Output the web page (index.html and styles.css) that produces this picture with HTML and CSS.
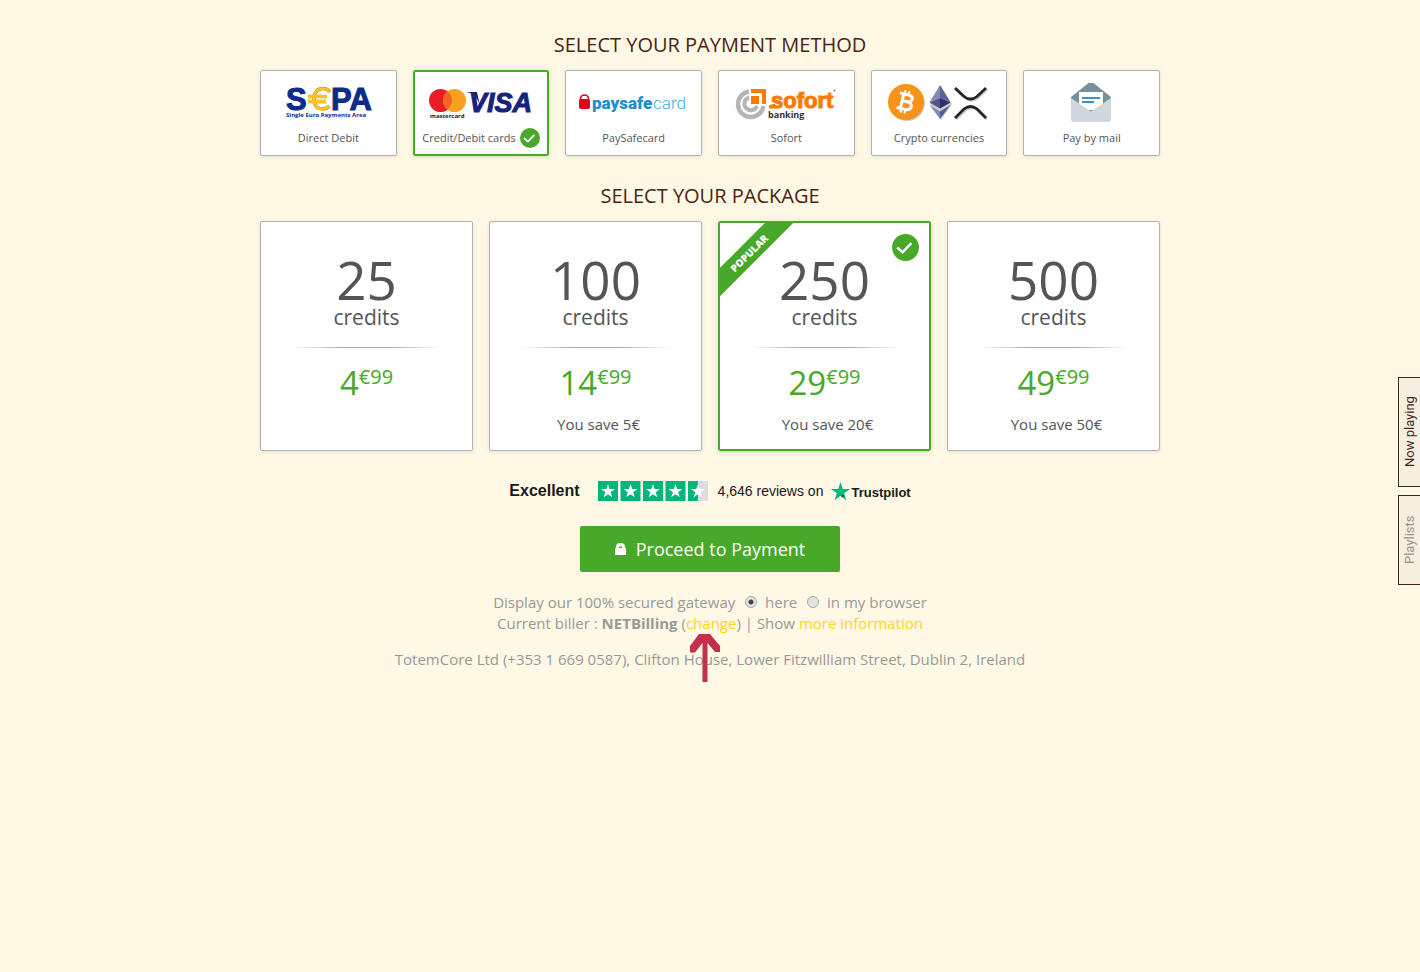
FILE: index.html
```
<!DOCTYPE html>
<html lang="en">
<head>
    <meta charset="UTF-8">
    <meta name="viewport" content="width=device-width, initial-scale=1.0">
    <title>Buy credits</title>
    <link rel="stylesheet" href="styles.css">
</head>
<body>

<svg class="defs" width="0" height="0" aria-hidden="true">
    <symbol id="check" viewBox="0 0 28 28">
        <circle cx="14" cy="14" r="14" fill="#48a829"/>
        <path d="M5.500 14l5.500 5 9-9.500" fill="none" stroke="#fff" stroke-width="2.600"/>
    </symbol>
    <symbol id="star" viewBox="0 0 20 20">
        <path d="M10 0l2.400 7.300H20l-6.200 4.500 2.400 7.300L10 14.600l-6.200 4.500 2.400-7.300L0 7.300h7.600z"/>
    </symbol>
</svg>

<main class="page">
    <form>
        <h2>SELECT YOUR PAYMENT METHOD</h2>
        <div class="methods">
            <label class="card method">
                <input type="radio" name="method">
                <svg class="logo" viewBox="0 0 110 40" aria-hidden="true">
                    <g font-family="Liberation Sans" font-weight="bold" fill="#0c2c8c">
                        <text x="13" y="27" font-size="31" stroke="#0c2c8c">S</text>
                        <text x="58" y="27" font-size="31" stroke="#0c2c8c">PA</text>
                        <text x="13" y="34" font-family="Open Sans" font-size="6">Single Euro Payments Area</text>
                    </g>
                    <path d="M57 9C53 4 44 4 41.500 12c-2 8 1 14 8 14 3 0 5-1 7-3M35 13.500h19M35 18.500h18" fill="none" stroke="#a8893a" stroke-width="3.600"/>
                    <path d="M57 9C53 4 44 4 41.500 12c-2 8 1 14 8 14 3 0 5-1 7-3M35 13.500h19M35 18.500h18" fill="none" stroke="#fbc51d" stroke-width="2.800"/>
                </svg>
                <span class="name">Direct Debit</span>
            </label>
            <label class="card method">
                <input type="radio" name="method" checked>
                <svg class="logo" viewBox="0 0 110 40" aria-hidden="true">
                    <circle cx="14.500" cy="17.500" r="11.500" fill="#ea1c27"/>
                    <circle cx="28.500" cy="17.500" r="11.500" fill="#f9a01f"/>
                    <path d="M21.500 8.400a11.500 11.500 0 0 1 0 18.200 11.500 11.500 0 0 1 0-18.200z" fill="#f26522"/>
                    <text x="4" y="35" font-family="Open Sans" font-size="6" font-weight="bold" fill="#222">mastercard</text>
                    <path d="M40 9h11l3 14C51 13 47 10 40 9z" fill="#14247e"/>
                    <text x="43" y="29" font-family="Liberation Sans" font-size="27" font-weight="bold" font-style="italic" fill="#14247e" stroke="#14247e">VISA</text>
                </svg>
                <span class="name">Credit/Debit cards <svg class="check" aria-hidden="true"><use href="#check"/></svg></span>
            </label>
            <label class="card method">
                <input type="radio" name="method">
                <svg class="logo" viewBox="0 0 110 40" aria-hidden="true">
                    <rect x="0" y="16" width="11" height="10" rx="2" fill="#e2001a"/>
                    <path d="M1.500 17v-1a4 4 0 0 1 8 0v1" fill="none" stroke="#e2001a" stroke-width="1.600"/>
                    <text x="13" y="26" font-family="Roboto" font-size="17" font-weight="900" fill="#1b8fd0">paysafe</text>
                    <text x="74" y="26" font-family="Roboto" font-size="17" font-weight="300" fill="#45ace0">card</text>
                </svg>
                <span class="name">PaySafecard</span>
            </label>
            <label class="card method">
                <input type="radio" name="method">
                <svg class="logo" viewBox="0 0 110 40" aria-hidden="true">
                    <path d="M18 8.500A12.800 12.800 0 1 0 32.500 23" fill="none" stroke="#b5b5b5" stroke-width="4.400"/>
                    <path d="M18 14.500A6.500 6.500 0 1 0 26 23" fill="none" stroke="#b5b5b5" stroke-width="4"/>
                    <path d="M20 6h15v15h-4v-11H20z" fill="#ff7a00"/>
                    <path d="M20 13h8v8h-8z" fill="#ff7a00"/>
                    <text x="40" y="25" font-family="Liberation Sans" font-size="22" font-weight="bold" fill="#ff7a00" stroke="#ff7a00">sofort</text>
                    <path d="M38 22h7v3.500h-7z" fill="#ff7a00"/>
                    <circle cx="103.500" cy="7.500" r="1" fill="#777"/>
                    <text x="37" y="35" font-family="Open Sans" font-size="9" font-weight="bold" fill="#333">banking</text>
                </svg>
                <span class="name">Sofort</span>
            </label>
            <label class="card method">
                <input type="radio" name="method">
                <svg class="logo" viewBox="0 0 110 40" aria-hidden="true">
                    <circle cx="23" cy="20" r="18" fill="#ccc"/>
                    <circle cx="22" cy="19" r="18" fill="#f7931a"/>
                    <g transform="rotate(13 22 19)" fill="none" stroke="#fff">
                        <path d="M18 11.500v15M14 11.500h9c6 0 6 7 0 7h-5M23 18.500c7 0 7 8 0 8h-9" stroke-width="3"/>
                        <path d="M19 7.500v4M23 7.500v4M19 26.500v4M23 26.500v4" stroke-width="2"/>
                    </g>
                    <path d="M57 3l11 18-11 16-11-16z" fill="#ccc"/>
                    <path d="M56 2L45.500 19.500 56 15z" fill="#8189b5"/>
                    <path d="M56 2v13l10.500 4.500z" fill="#5b6397"/>
                    <path d="M56 15L45.500 19.500 56 25.500z" fill="#4d568f"/>
                    <path d="M56 15l10.500 4.500L56 25.500z" fill="#2b3268"/>
                    <path d="M45.500 22L56 28.500V36z" fill="#8189b5"/>
                    <path d="M66.500 22L56 28.500V36z" fill="#555d93"/>
                    <g fill="none">
                        <path d="M72 6l9 8.500q6.500 5 13 0L103 6M72 36l9-9q6.500-5 13 0l9 9" stroke="#ccc" stroke-width="3.400"/>
                        <path d="M71 5l9 8.500q6.500 5 13 0L102 5M71 35l9-9q6.500-5 13 0l9 9" stroke="#252525" stroke-width="2.800"/>
                    </g>
                </svg>
                <span class="name">Crypto currencies</span>
            </label>
            <label class="card method">
                <input type="radio" name="method">
                <svg class="logo" viewBox="0 0 110 40" aria-hidden="true">
                    <path d="M34 16v-2L51.500 0q2.500-2 5 0L74 14v2L54 32z" fill="#78909c"/>
                    <path d="M42 9h24v18H42z" fill="#fff"/>
                    <path d="M34 15l8 5.500 12 8 12-8 8-5.500v21q0 3-3 3H37q-3 0-3-3z" fill="#cfd8dc"/>
                    <path d="M45 15h18M45 19h12" stroke="#3d8fd1" stroke-width="2"/>
                </svg>
                <span class="name">Pay by mail</span>
            </label>
        </div>

        <h2>SELECT YOUR PACKAGE</h2>
        <div class="packages">
            <label class="card package">
                <input type="radio" name="package">
                <span class="amount">25</span>
                <span class="unit">credits</span>
                <span class="line"></span>
                <span class="price">4<sup>€99</sup></span>
            </label>
            <label class="card package">
                <input type="radio" name="package">
                <span class="amount">100</span>
                <span class="unit">credits</span>
                <span class="line"></span>
                <span class="price">14<sup>€99</sup></span>
                <span class="save">You save 5€</span>
            </label>
            <label class="card package">
                <input type="radio" name="package" checked>
                <span class="ribbon"><span>POPULAR</span></span>
                <svg class="check" aria-hidden="true"><use href="#check"/></svg>
                <span class="amount">250</span>
                <span class="unit">credits</span>
                <span class="line"></span>
                <span class="price">29<sup>€99</sup></span>
                <span class="save">You save 20€</span>
            </label>
            <label class="card package">
                <input type="radio" name="package">
                <span class="amount">500</span>
                <span class="unit">credits</span>
                <span class="line"></span>
                <span class="price">49<sup>€99</sup></span>
                <span class="save">You save 50€</span>
            </label>
        </div>

        <div class="trust">
            <strong>Excellent</strong>
            <svg class="stars" viewBox="0 0 110 20" role="img" aria-label="4.5 out of 5 stars">
                <path d="M0 0h20v20H0zM22.500 0h20v20h-20zM45 0h20v20H45zM67.500 0h20v20h-20zM90 0h10v20H90z" fill="#00b67a"/>
                <path d="M100 0h10v20h-10z" fill="#dcdce6"/>
                <g fill="#fff">
                    <use href="#star" x="3" y="3" width="14" height="14"/>
                    <use href="#star" x="25.500" y="3" width="14" height="14"/>
                    <use href="#star" x="48" y="3" width="14" height="14"/>
                    <use href="#star" x="70.500" y="3" width="14" height="14"/>
                    <use href="#star" x="93" y="3" width="14" height="14"/>
                </g>
            </svg>
            <span class="reviews">4,646 reviews on</span>
            <span class="brand">
                <svg viewBox="0 0 20 20" fill="#00b67a" aria-hidden="true">
                    <use href="#star"/>
                    <path d="M14.300 13.300l-4.300 1.300 2.500 1.700z" fill="#005128"/>
                </svg>
                <span>Trustpilot</span>
            </span>
        </div>

        <button type="submit" class="proceed">
            <svg viewBox="0 0 12 12" aria-hidden="true">
                <path d="M0 12V5h1V4a4 4 0 0 1 4-4h1a4 4 0 0 1 4 4v1h1v7zM4 3.500v1.500h3V3.500z" fill="#fff" fill-rule="evenodd"/>
            </svg>
            Proceed to Payment
        </button>

        <div class="info">
            <div>
                Display our 100% secured gateway
                <label><input type="radio" name="gateway" checked> here</label>
                <label><input type="radio" name="gateway"> in my browser</label>
            </div>
            <div>
                Current biller : <b>NETBilling</b>
                (<span class="change"><a href="#">change</a><svg class="arrow" viewBox="0 0 30 48" aria-hidden="true"><path d="M9 0h11l10 12v6h-5l-7.500-9v39h-5V9L5 18.500H0V12z" fill="#c4304c"/></svg></span>)
                | Show <a href="#">more information</a>
            </div>
        </div>
        <p class="address">TotemCore Ltd (+353 1 669 0587), Clifton House, Lower Fitzwilliam Street, Dublin 2, Ireland</p>
    </form>
</main>

<div class="side">
    <button type="button" class="playing">Now playing</button>
    <button type="button" class="lists">Playlists</button>
</div>

</body>
</html>
```
FILE: styles.css
```
body {
    margin: 0;
    background: #fff8e5;
    color: #999;
    font-family: "Open Sans", sans-serif;
    font-size: 15px;
    text-align: center;
}

.defs {
    position: absolute;
}

.page {
    max-width: 900px;
    margin: 0 auto;
    padding: 31px 20px;
}

h2 {
    margin: 0 0 11px;
    color: #4a2412;
    font-size: 20px;
    font-weight: normal;
    line-height: 28px;
}

.methods, .packages {
    display: grid;
    gap: 16px;
}

.methods {
    grid-template-columns: repeat(6, 1fr);
    margin-bottom: 26px;
}

.packages {
    grid-template-columns: repeat(4, 1fr);
}

.card {
    position: relative;
    display: flex;
    flex-direction: column;
    align-items: center;
    background: #fff;
    border: 1px solid #b3b3b3;
    border-radius: 2px;
    color: #555;
    box-shadow: 0 1px 4px rgba(0, 0, 0, 0.1);
    cursor: pointer;
}

.card input {
    position: absolute;
    opacity: 0;
}

.card:has(input:checked) {
    border-color: #48a829;
    box-shadow: inset 0 0 0 1px #48a829, 0 1px 4px rgba(72, 168, 41, 0.3);
}

.method {
    padding: 12px 0 7px;
}

.logo {
    width: 110px;
    height: 40px;
}

.name {
    display: flex;
    align-items: center;
    gap: 4px;
    margin-top: 5px;
    font-size: 11px;
    line-height: 20px;
}

.name .check {
    width: 20px;
    height: 20px;
}

.package {
    padding: 32px 0 16px;
}

.package .check {
    position: absolute;
    top: 12px;
    right: 11px;
    width: 27px;
    height: 27px;
}

.amount {
    font-size: 53px;
    line-height: 52px;
}

.unit {
    font-size: 21px;
    line-height: 22px;
}

.line {
    width: 152px;
    height: 1px;
    margin: 19px 0 18px;
    background: linear-gradient(to right, #fff, #aaa 35%, #aaa 65%, #fff);
}

.price {
    color: #48a829;
    font-size: 33px;
    line-height: 34px;
}

.price sup {
    font-size: 20px;
    line-height: 0;
    vertical-align: 11px;
}

.save {
    margin-top: 14px;
    padding-left: 6px;
    line-height: 20px;
}

.ribbon {
    position: absolute;
    top: 1px;
    left: 1px;
    width: 74px;
    height: 74px;
    overflow: hidden;
}

.ribbon span {
    position: absolute;
    top: 20px;
    left: -31px;
    width: 120px;
    background: #48a829;
    color: #fff;
    font-size: 10px;
    font-weight: 800;
    line-height: 20px;
    transform: rotate(-45deg);
}

.trust {
    display: flex;
    justify-content: center;
    align-items: center;
    height: 20px;
    margin-top: 30px;
    color: #191919;
    font-family: "Liberation Sans", sans-serif;
    font-size: 14px;
}

.trust strong {
    margin-right: 18px;
    font-size: 16px;
}

.stars {
    width: 110px;
    height: 20px;
    margin-right: 10px;
}

.brand {
    display: flex;
    align-items: center;
    gap: 1px;
    margin-left: 8px;
    font-size: 13px;
    font-weight: bold;
}

.brand span {
    padding-top: 3px;
}

.brand svg {
    width: 19px;
    height: 19px;
}

.proceed {
    display: flex;
    justify-content: center;
    align-items: center;
    gap: 9px;
    width: 260px;
    height: 46px;
    margin: 25px auto 20px;
    border: 0;
    border-radius: 2px;
    background: #48a829;
    color: #fff;
    font-family: inherit;
    font-size: 18px;
    font-weight: 500;
    cursor: pointer;
}

.proceed svg {
    width: 12px;
    height: 12px;
}

.info {
    line-height: 21px;
}

.info input {
    appearance: none;
    box-sizing: border-box;
    width: 12px;
    height: 12px;
    margin: 0 4px 0 6px;
    border: 1px solid #aaa;
    border-radius: 50%;
    background: #e2e2e2;
}

.info input:checked {
    background: radial-gradient(circle, #444 0 2px, #e2e2e2 3px);
}

a {
    color: #fcd518;
    text-decoration: none;
}

.change {
    position: relative;
}

.arrow {
    position: absolute;
    top: 21px;
    left: 4px;
    width: 30px;
    height: 48px;
}

.address {
    margin: 15px 0 0;
    line-height: 21px;
}

.side {
    position: fixed;
    top: 377px;
    right: 0;
    display: flex;
    flex-direction: column;
    gap: 8px;
}

.side button {
    width: 22px;
    padding: 0;
    border: 1px solid #4a2412;
    border-left: 0;
    background: #f5efdf;
    color: #4a2412;
    font-family: Roboto, sans-serif;
    font-size: 13px;
    writing-mode: vertical-rl;
    transform: rotate(180deg);
    cursor: pointer;
}

.side .playing {
    height: 110px;
}

.side .lists {
    height: 90px;
    color: #a39080;
}
```
